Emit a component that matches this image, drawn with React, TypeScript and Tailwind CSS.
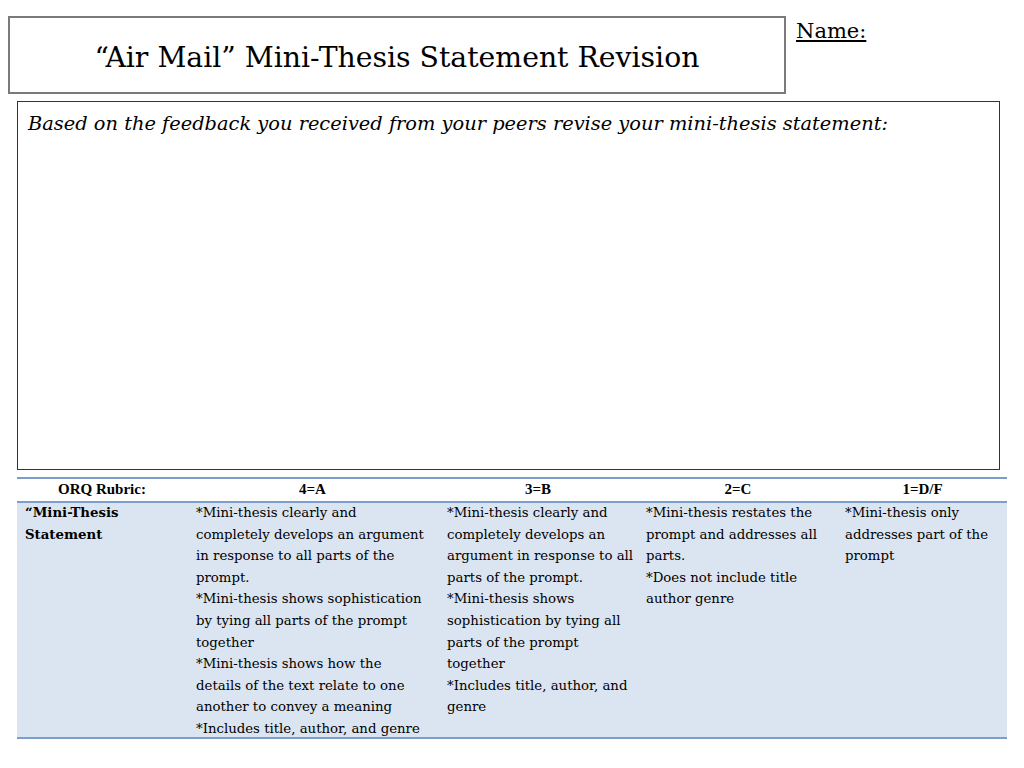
const serif = "font-['DejaVu_Serif','Liberation_Serif',serif]";

const cols = [
  {
    head: "4=A",
    lines: [
      "*Mini-thesis clearly and",
      "completely develops an argument",
      "in response to all parts of the",
      "prompt.",
      "*Mini-thesis shows sophistication",
      "by tying all parts of the prompt",
      "together",
      "*Mini-thesis shows how the",
      "details of the text relate to one",
      "another to convey a meaning",
      "*Includes title, author, and genre",
    ],
  },
  {
    head: "3=B",
    lines: [
      "*Mini-thesis clearly and",
      "completely develops an",
      "argument in response to all",
      "parts of the prompt.",
      "*Mini-thesis shows",
      "sophistication by tying all",
      "parts of the prompt",
      "together",
      "*Includes title, author, and",
      "genre",
    ],
  },
  {
    head: "2=C",
    lines: [
      "*Mini-thesis restates the",
      "prompt and addresses all",
      "parts.",
      "*Does not include title",
      "author genre",
    ],
  },
  {
    head: "1=D/F",
    lines: ["*Mini-thesis only", "addresses part of the", "prompt"],
  },
];

const colPad = ["pl-[9px]", "pl-[9px]", "pl-[8px]", "pl-[7px]"];

export default function App() {
  return (
    <div className={`relative h-[768px] w-[1024px] overflow-hidden bg-white text-black ${serif}`}>
      {/* Title + name */}
      <div className="flex items-start pl-[8px] pt-[16px]">
        <div className="flex h-[78px] w-[778px] items-center justify-center border-2 border-[#7a7a7a] pt-[6px]">
          <h1 className="text-[28.3px] leading-none">“Air Mail” Mini-Thesis Statement Revision</h1>
        </div>
        <div className="ml-[10px] mt-[1px] text-[21px] leading-[28px] underline underline-offset-2">Name:</div>
      </div>

      {/* Revision box */}
      <div className="ml-[17px] mt-[7px] h-[369px] w-[983px] border border-[#333] px-[10px] pt-[8px]">
        <p className="whitespace-nowrap text-[19.4px] italic leading-[27px]">
          Based on the feedback you received from your peers revise your mini-thesis statement:
        </p>
      </div>

      {/* Rubric */}
      <div className="ml-[17px] mt-[7px] w-[990px]">
        <div className="grid h-[26px] grid-cols-[170px_251px_200px_200px_169px] border-y-2 border-[#7b9dcc] font-['Liberation_Serif',serif] text-[15px] font-bold leading-[18px]">
          <div className="flex justify-center pt-[1px]">ORQ Rubric:</div>
          {cols.map((c) => (
            <div key={c.head} className="flex justify-center pt-[1px]">
              {c.head}
            </div>
          ))}
        </div>
        <div className="grid h-[236px] grid-cols-[170px_251px_200px_200px_169px] border-b-2 border-[#7b9dcc] bg-[#dbe5f1] text-[13.3px] leading-[21.6px]">
          <div className="-mt-[1px] pl-[8px] font-bold">
            <div>“Mini-Thesis</div>
            <div>Statement</div>
          </div>
          {cols.map((c, i) => (
            <div key={c.head} className={`${colPad[i]} -mt-[1px]`}>
              {c.lines.map((l) => (
                <div key={l} className="whitespace-nowrap">
                  {l}
                </div>
              ))}
            </div>
          ))}
        </div>
      </div>
    </div>
  );
}
